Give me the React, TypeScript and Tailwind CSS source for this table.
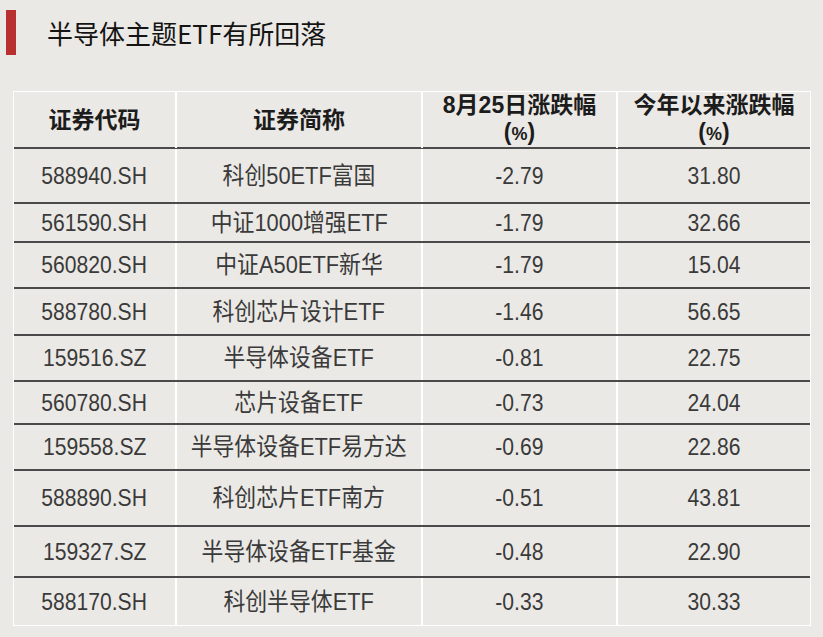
import React from "react";

interface Row {
  code: string;
  name: string;
  day: string;
  ytd: string;
  h: string;
}

// row heights follow the picture, they are not all the same
const ROWS: Row[] = [
  { code: "588940.SH", name: "科创50ETF富国",       day: "-2.79", ytd: "31.80", h: "h-[55px]" },
  { code: "561590.SH", name: "中证1000增强ETF",     day: "-1.79", ytd: "32.66", h: "h-[39px]" },
  { code: "560820.SH", name: "中证A50ETF新华",      day: "-1.79", ytd: "15.04", h: "h-[46px]" },
  { code: "588780.SH", name: "科创芯片设计ETF",     day: "-1.46", ytd: "56.65", h: "h-[47px]" },
  { code: "159516.SZ", name: "半导体设备ETF",       day: "-0.81", ytd: "22.75", h: "h-[46px]" },
  { code: "560780.SH", name: "芯片设备ETF",         day: "-0.73", ytd: "24.04", h: "h-[43px]" },
  { code: "159558.SZ", name: "半导体设备ETF易方达", day: "-0.69", ytd: "22.86", h: "h-[46px]" },
  { code: "588890.SH", name: "科创芯片ETF南方",     day: "-0.51", ytd: "43.81", h: "h-[56px]" },
  { code: "159327.SZ", name: "半导体设备ETF基金",   day: "-0.48", ytd: "22.90", h: "h-[51px]" },
  { code: "588170.SH", name: "科创半导体ETF",       day: "-0.33", ytd: "30.33", h: "h-[47px]" },
];

const grid = "grid grid-cols-[163px_246px_195px_192px]";
const cell = "flex items-center justify-center border-r-2 border-white last:border-r-0";
const num  = "inline-block scale-x-[0.88] whitespace-nowrap font-['Liberation_Sans','Noto_Sans_CJK_SC',sans-serif] text-[24px] text-[#3a3a3a]";
const cjk  = "inline-block scale-x-[0.91] whitespace-nowrap font-['Liberation_Sans','Noto_Sans_CJK_SC',sans-serif] text-[24px] text-[#3a3a3a]";

function Pct() {
  return (
    <span className="block">
      (<span className="text-[18px]">%</span>)
    </span>
  );
}

export default function App() {
  return (
    <div className="w-[823px] h-[637px] bg-[#ebe9e5] overflow-hidden">
      {/* Title */}
      <div className="flex items-center pt-[10px]">
        <div className="ml-[6px] w-[10px] h-[45px] bg-[#b8302f]" />
        <h1 className="ml-[31px] text-[26px] leading-none text-[#141414] font-['Noto_Sans_CJK_SC',sans-serif]">
          半导体主题ETF有所回落
        </h1>
      </div>

      {/* Table */}
      <div className="mt-[36px] ml-[13px] w-[798px] border border-white">
        <div className={`${grid} h-[57px] border-b-2 border-[#4a4a4a]`}>
          {[
            <span key="a">证券代码</span>,
            <span key="b">证券简称</span>,
            <span key="c" className="text-center leading-[27px]">8月25日涨跌幅<Pct /></span>,
            <span key="d" className="text-center leading-[27px]">今年以来涨跌幅<Pct /></span>,
          ].map((content, i) => (
            <div
              key={i}
              className={`${cell} font-bold text-[23px] text-[#1c1c1c] font-['Liberation_Sans','Noto_Sans_CJK_SC',sans-serif]`}
            >
              {content}
            </div>
          ))}
        </div>

        {ROWS.map((r, i) => (
          <div
            key={r.code}
            className={`${grid} ${r.h} ${i < ROWS.length - 1 ? "border-b-2 border-[#4a4a4a]" : ""}`}
          >
            <div className={cell}><span className={num}>{r.code}</span></div>
            <div className={cell}><span className={cjk}>{r.name}</span></div>
            <div className={cell}><span className={num}>{r.day}</span></div>
            <div className={cell}><span className={num}>{r.ytd}</span></div>
          </div>
        ))}
      </div>
    </div>
  );
}
